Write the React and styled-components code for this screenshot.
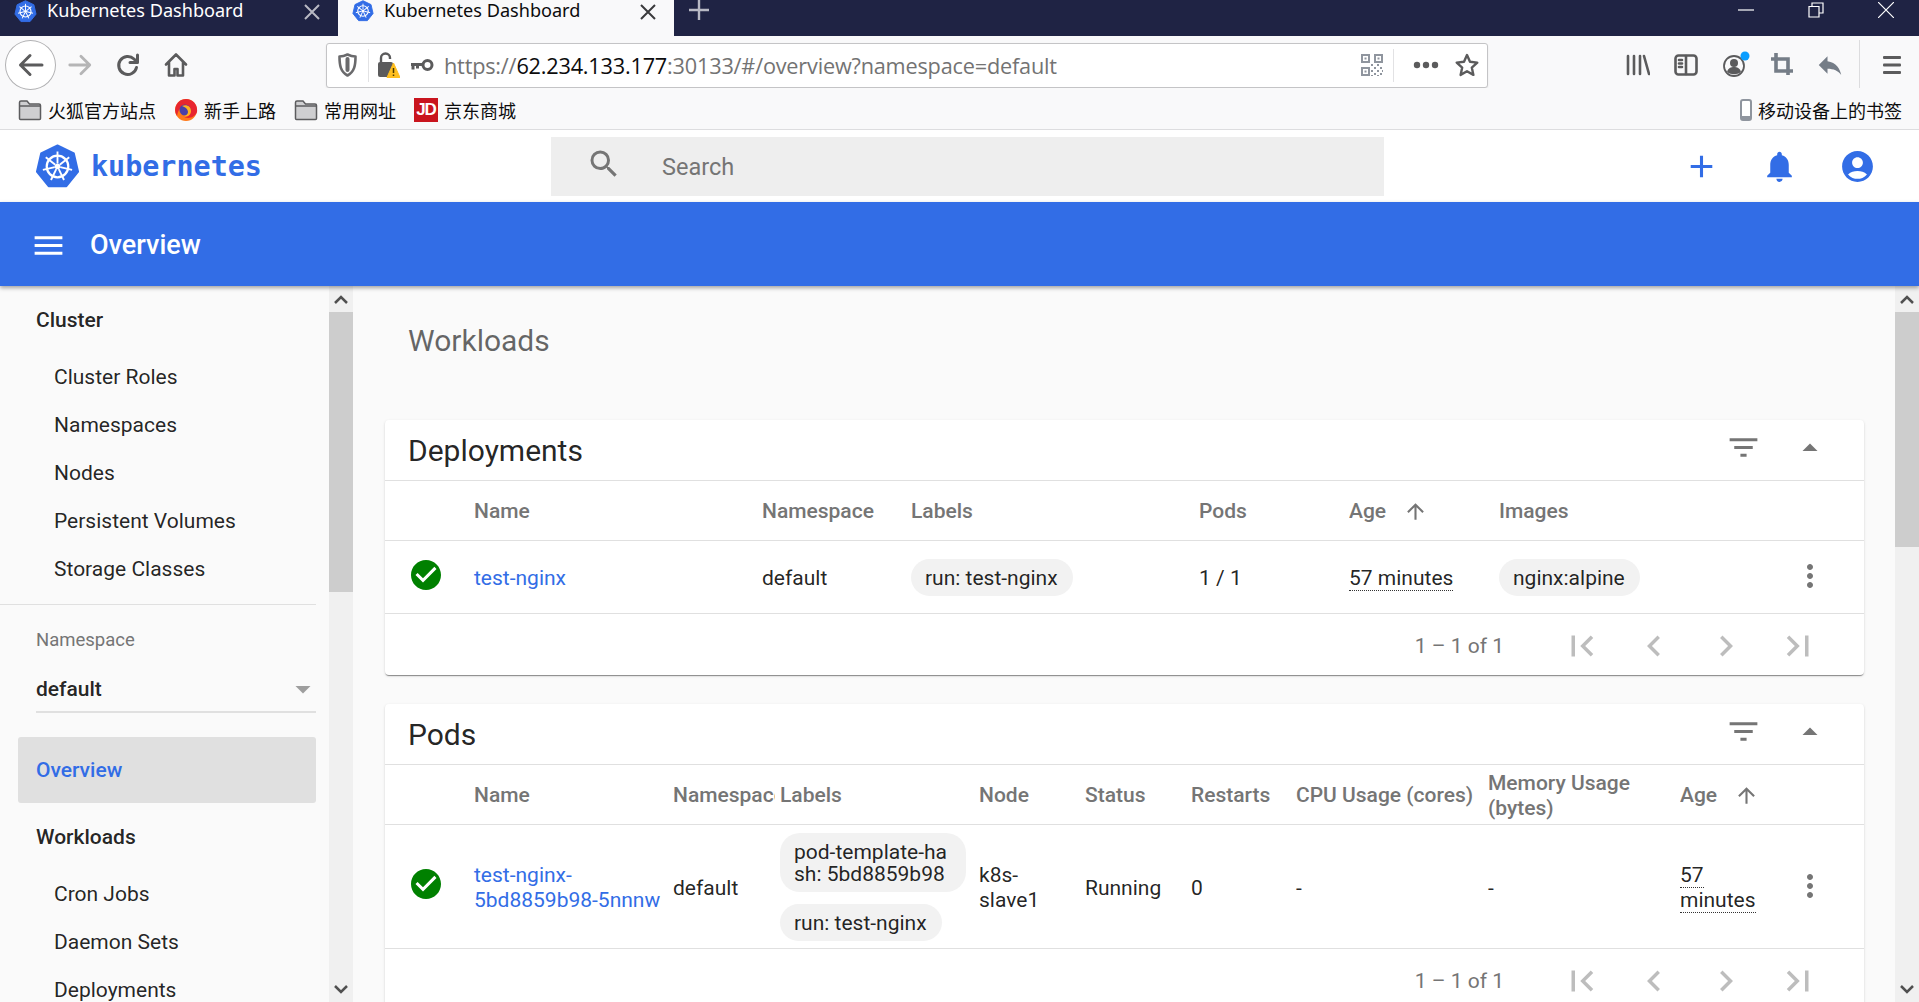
import styled, { createGlobalStyle } from 'styled-components';
import {
  MdAdd, MdAccountCircle, MdArrowDropDown, MdArrowDropUp, MdArrowUpward, MdCheckCircle,
  MdChevronLeft, MdChevronRight, MdFilterList, MdFirstPage, MdLastPage, MdMenu, MdMoreVert,
  MdNotifications, MdReply, MdSearch,
} from 'react-icons/md';

const GlobalStyle = createGlobalStyle`
  html, body { margin: 0; padding: 0; height: 100%; overflow: hidden; }
  body { font-family: Roboto, "Noto Sans CJK SC", sans-serif; background: #fafafa; }
  * { box-sizing: border-box; }
`;

const Page = styled.div`
  height: 100vh;
  display: flex;
  flex-direction: column;
  overflow: hidden;
`;

/* browser chrome */
const TabStrip = styled.div`
  height: 36px;
  flex: none;
  display: flex;
  background: #1f2344;
  color: #fff;
  overflow: hidden;
`;

const Tab = styled.div`
  width: ${(p) => (p.$active ? 336 : 338)}px;
  display: flex;
  align-items: flex-start;
  padding: 0 18px 0 14px;
  background: ${(p) => (p.$active ? '#f9f9fa' : 'transparent')};
  color: ${(p) => (p.$active ? '#0c0c0d' : '#fff')};
`;

const TabTitle = styled.span`
  margin-left: 10px;
  font: 18.1px/21px "Noto Sans", "Noto Sans CJK SC", sans-serif;
`;

const TabClose = styled.svg`
  width: 16px;
  height: 16px;
  margin: 4px 0 0 auto;
  stroke: ${(p) => p.$color};
  stroke-width: 2;
`;

const NewTab = styled.svg`
  width: 20px;
  height: 20px;
  margin-left: 15px;
  stroke: #b8b9c4;
  stroke-width: 2.4;
`;

const WindowControls = styled.div`
  margin-left: auto;
  display: flex;
  align-items: flex-start;
  gap: 54px;
  padding: 2px 25px 0 0;
`;

const WindowIcon = styled.svg`
  width: 16px;
  height: 16px;
  fill: none;
  stroke: #fff;
  stroke-width: 1.2;
`;

const NavBar = styled.div`
  height: 52px;
  flex: none;
  display: flex;
  align-items: center;
  padding: 6px 3px 0 5px;
  background: #f9f9fa;
`;

const BackButton = styled.div`
  width: 51px;
  height: 50px;
  flex: none;
  border: 1px solid #b1b1b3;
  border-radius: 50%;
  background: #fff;
  color: #5b5b5c;
  display: flex;
  align-items: center;
  justify-content: center;
  z-index: 1;
`;

const NavSlot = styled.div`
  width: ${(p) => p.$w || 48}px;
  height: 44px;
  flex: none;
  display: flex;
  align-items: center;
  justify-content: center;
  color: ${(p) => p.$color || '#5b5b5c'};
`;

const UrlBar = styled.div`
  width: 1162px;
  height: 45px;
  margin-left: 126px;
  display: flex;
  align-items: center;
  flex: none;
  background: #fff;
  border: 1px solid #c4c4c6;
  border-radius: 3px;
  box-shadow: 0 1px 2px rgba(0, 0, 0, 0.08);
`;

const UrlDivider = styled.div`
  width: 1px;
  height: 33px;
  flex: none;
  background: #e2e2e4;
  margin-right: ${(p) => p.$mr || 0}px;
`;

const UrlText = styled.div`
  flex: 1;
  margin-left: 9px;
  padding-top: 1px;
  font: 21.7px/26px "Open Sans", "Noto Sans", sans-serif;
  letter-spacing: -0.2px;
  color: #737373;
  white-space: nowrap;
  b { font-weight: 400; color: #0c0c0d; }
`;

const ToolGroup = styled.div`
  margin-left: auto;
  display: flex;
  align-items: center;
`;

const ToolDivider = styled.div`
  width: 1px;
  height: 50px;
  margin: 0 8px 0 5px;
  background: #dcdcde;
`;

const BookmarkBar = styled.div`
  height: 42px;
  flex: none;
  display: flex;
  align-items: center;
  padding: 2px 17px 0 18px;
  background: #f9f9fa;
  border-bottom: 1px solid #dddddf;
`;

const Bookmark = styled.div`
  display: flex;
  align-items: center;
  gap: 6px;
  margin-right: 18px;
  font: 18px/24px "Noto Sans CJK SC", sans-serif;
  color: #0c0c0d;
  &:last-child { margin: 0 0 0 auto; }
`;

const JdBadge = styled.span`
  width: 24px;
  height: 24px;
  background: #c9151e;
  color: #fff;
  font: 700 17px/24px "Liberation Sans", sans-serif;
  letter-spacing: -1px;
  text-align: center;
`;

/* dashboard header */
const TopBar = styled.header`
  height: 72px;
  flex: none;
  display: flex;
  align-items: center;
  background: #fff;
  color: #326de6;
`;

const Brand = styled.div`
  width: 551px;
  display: flex;
  align-items: center;
  padding-left: 35px;
  gap: 11px;
`;

const BrandName = styled.span`
  margin-top: 2px;
  font: 700 28.4px/34px "DejaVu Sans Mono", monospace;
`;

const SearchBox = styled.div`
  width: 833px;
  height: 59px;
  display: flex;
  align-items: center;
  padding: 2px 0 0 35px;
  gap: 40px;
  background: #eeeeee;
  color: #757575;
  font-size: 23.5px;
  svg { margin-top: -7px; }
`;

const TopActions = styled.div`
  margin-left: auto;
  display: flex;
  gap: 41px;
  padding-right: 43px;
`;

const TitleBar = styled.div`
  height: 84px;
  flex: none;
  display: flex;
  align-items: center;
  padding: 2px 0 0 30px;
  gap: 23px;
  background: #326de6;
  color: #fff;
  font-size: 27px;
  font-weight: 500;
  box-shadow: 0 2px 4px rgba(0, 0, 0, 0.35);
  z-index: 2;
`;

const Body = styled.div`
  flex: 1;
  min-height: 0;
  display: flex;
`;

/* scrollbars */
const ScrollTrack = styled.div`
  width: 24px;
  flex: none;
  display: flex;
  flex-direction: column;
  background: #f0f0f0;
  color: #505050;
`;

const ScrollArrow = styled.div`
  height: 26px;
  flex: none;
  display: flex;
  align-items: center;
  justify-content: center;
  &:last-child { margin-top: auto; }
`;

const ScrollThumb = styled.div`
  height: ${(p) => p.$h}px;
  background: #cdcdcd;
`;

/* side navigation */
const Sidebar = styled.aside`
  width: 329px;
  flex: none;
  padding: 10px 13px 0 0;
  overflow: hidden;
  font-size: 21px;
  color: rgba(0, 0, 0, 0.87);
`;

const NavTitle = styled.div`
  height: 48px;
  display: flex;
  align-items: center;
  padding-left: 36px;
  margin-bottom: 9px;
  font-weight: 500;
`;

const NavItem = styled.div`
  height: 48px;
  display: flex;
  align-items: center;
  padding-left: 54px;
  white-space: nowrap;
`;

const NavDivider = styled.div`
  height: 1px;
  margin-top: 11px;
  background: #e0e0e0;
`;

const NamespaceBlock = styled.div`
  margin-left: 36px;
  padding-top: 24px;
`;

const NamespaceLabel = styled.div`
  height: 22px;
  font-size: 18.5px;
  line-height: 22px;
  color: #757575;
`;

const NamespaceSelect = styled.div`
  height: 45px;
  margin-top: 17px;
  display: flex;
  align-items: center;
  justify-content: space-between;
  padding-bottom: 1px;
  border-bottom: 2px solid #e0e0e0;
  font-weight: 500;
  color: #9e9e9e;
  span { color: rgba(0, 0, 0, 0.87); }
  svg { margin-right: -5px; }
`;

const ActiveItem = styled.div`
  height: 66px;
  margin: 24px 0 10px 18px;
  display: flex;
  align-items: center;
  padding-left: 18px;
  border-radius: 3px;
  background: #e0e0e0;
  color: #326de6;
  font-weight: 500;
`;

/* main content */
const Main = styled.main`
  flex: 1;
  min-width: 0;
  padding: 35px 31px 0 32px;
  overflow: hidden;
`;

const SectionHeading = styled.h1`
  height: 40px;
  margin: 0 0 59px 23px;
  font-size: 30px;
  line-height: 40px;
  font-weight: 400;
  color: rgba(0, 0, 0, 0.6);
`;

const Card = styled.section`
  margin-bottom: 29px;
  background: #fff;
  border-radius: 4px;
  box-shadow: 0 2px 1px -1px rgba(0, 0, 0, 0.3), 0 1px 1px 0 rgba(0, 0, 0, 0.14), 0 1px 3px 0 rgba(0, 0, 0, 0.12);
`;

const CardHeader = styled.div`
  height: 61px;
  display: flex;
  align-items: center;
  padding: 0 36px 0 23px;
  border-bottom: 1px solid #e0e0e0;
  color: #757575;
`;

const CardTitle = styled.h2`
  margin: 0 auto 0 0;
  font-size: 30px;
  font-weight: 400;
  color: rgba(0, 0, 0, 0.87);
`;

const HeaderActions = styled.div`
  display: flex;
  align-items: center;
  gap: 30px;
  margin-top: -5px;
`;

const TableRow = styled.div`
  display: grid;
  grid-template-columns: ${(p) => p.$columns};
  align-items: center;
  min-height: ${(p) => p.$height}px;
  padding-right: 36px;
  border-bottom: 1px solid #e0e0e0;
`;

const HeadCell = styled.div`
  display: flex;
  align-items: center;
  gap: 17px;
  min-width: 0;
  margin-right: ${(p) => p.$mr || 0}px;
  padding-top: 2px;
  overflow: hidden;
  white-space: ${(p) => (p.$wrap ? 'normal' : 'nowrap')};
  font-size: 21px;
  line-height: 25px;
  font-weight: 500;
  color: #757575;
`;

const Cell = styled.div`
  min-width: 0;
  padding: 3px ${(p) => p.$pr || 0}px 0 0;
  font-size: 21px;
  line-height: 25px;
  color: rgba(0, 0, 0, 0.87);
`;

const StatusCell = styled.div`
  padding-left: 23px;
  display: flex;
  margin-bottom: 5px;
  color: #008000;
`;

const NameLink = styled.a`
  color: #326de6;
  text-decoration: none;
`;

const AgeText = styled.span`
  border-bottom: 1px dotted rgba(0, 0, 0, 0.8);
`;

const ChipStack = styled.div`
  display: flex;
  flex-direction: column;
  align-items: flex-start;
  gap: 12px;
`;

const Chip = styled.span`
  max-width: 186px;
  padding: 8px 15px 7px 14px;
  background: #f2f2f2;
  border-radius: 20px;
  font-size: 21px;
  line-height: 22px;
  word-break: break-all;
  color: rgba(0, 0, 0, 0.87);
`;

const RowMenu = styled.div`
  display: flex;
  margin-bottom: 2px;
  color: #757575;
`;

const Paginator = styled.div`
  height: 61px;
  display: flex;
  align-items: center;
  justify-content: flex-end;
  padding: 2px 30px 0 0;
  font-size: 21px;
  color: #757575;
`;

const PageRange = styled.span`
  margin-right: 42px;
`;

const PageButton = styled.div`
  width: 72px;
  display: flex;
  justify-content: center;
  color: #bdbdbd;
`;

const ProfileSvg = styled.svg`
  margin-left: 4px;
`;

const KubeLogo = ({ size }) => {
  const spokes = [0, 51.43, 102.86, 154.29, 205.71, 257.14, 308.57];
  return (
    <svg width={size} height={size} viewBox="0 0 48 48">
      <path
        d="M24 1.5 41.5 10 46 29.5 33.5 45H14.500L2 29.500 6.500 10Z"
        fill="#326de6"
        stroke="#326de6"
        strokeWidth="2"
        strokeLinejoin="round"
      />
      <g stroke="#fff" fill="none">
        <circle cx="24" cy="24" r="11.5" strokeWidth="2.4" />
        {spokes.map((a) => (
          <line key={a} x1="24" y1="21" x2="24" y2="8" strokeWidth="2" transform={`rotate(${a} 24 24)`} />
        ))}
      </g>
      <circle cx="24" cy="24" r="3" fill="#fff" />
    </svg>
  );
};

const CloseGlyph = ({ color }) => (
  <TabClose viewBox="0 0 16 16" $color={color}>
    <path d="M1 1l14 14M15 1 1 15" />
  </TabClose>
);

const Folder = () => (
  <svg width="24" height="22" viewBox="0 0 24 22">
    <path d="M1.500 19.500V3.500A1.500 1.500 0 0 1 3 2h6l2.500 3H21a1.500 1.500 0 0 1 1.500 1.500v13a1 1 0 0 1-1 1h-19a1 1 0 0 1-1-1Z" fill="#cfcfd1" stroke="#5c5c5e" strokeWidth="1.500" />
    <path d="M2 7h20" stroke="#5c5c5e" strokeWidth="1.500" />
  </svg>
);

const FirefoxLogo = () => (
  <svg width="24" height="26" viewBox="0 0 24 26">
    <circle cx="12" cy="13" r="11" fill="#ff7a1a" />
    <path d="M12 2a11 11 0 0 0-9 17c1-6 3-8 6-9 3-1 6 0 7 3 1 4-3 7-7 6 3 3 11 3 14-4 1-7-4-13-11-13Z" fill="#e8252f" />
    <circle cx="11" cy="13" r="5.500" fill="#4a3fa8" />
    <path d="M8 9c4-2 9 0 9 5 0 4-4 7-8 5 3 0 5-2 5-4 0-3-3-5-6-6Z" fill="#ffb01f" />
  </svg>
);

const stroke = { fill: 'none', stroke: 'currentColor', strokeLinecap: 'round', strokeLinejoin: 'round' };

const ArrowLeft = () => (
  <svg width="28" height="28" viewBox="0 0 28 28" {...stroke} strokeWidth="3">
    <path d="M25 14H3.500M13 4.500 3.500 14l9.500 9.500" />
  </svg>
);

const ArrowRight = () => (
  <svg width="26" height="26" viewBox="0 0 28 28" {...stroke} strokeWidth="3">
    <path d="M3 14h21.500M15 4.500l9.500 9.500-9.500 9.500" />
  </svg>
);

const Reload = () => (
  <svg width="24" height="26" viewBox="0 0 24 26" {...stroke} strokeWidth="3">
    <path d="M20.500 15.500a9 9 0 1 1-2.500-8.500l3 3M21.500 3v7.500H14" />
  </svg>
);

const Home = () => (
  <svg width="24" height="26" viewBox="0 0 24 26" {...stroke} strokeWidth="2.600">
    <path d="M2 12.500 12 2.500l10 10M5 10v13.500h5.500V17h3v6.500H19V10" />
  </svg>
);

const Shield = () => (
  <svg width="19" height="24" viewBox="0 0 19 24" {...stroke} strokeWidth="2.600">
    <path d="M9.500 1.500c3 1.500 5.500 2 8 2 0 9-1 15-8 19-7-4-8-10-8-19 2.500 0 5-.5 8-2Z" />
    <path d="M9.500 6v11" strokeWidth="4" />
  </svg>
);

const LockWarning = () => (
  <svg width="22" height="28" viewBox="0 0 22 28">
    <rect x="0" y="11" width="15" height="15" rx="2" fill="#5b5b5c" />
    <path d="M3 11V7a4.500 4.500 0 0 1 9 0v1" fill="none" stroke="#5b5b5c" strokeWidth="2.400" />
    <path d="M15.500 12 22 26.500H9Z" fill="#ffbf1f" stroke="#ffbf1f" strokeLinejoin="round" />
    <path d="M15.500 17v5M15.500 23.500v1.500" stroke="#4a3a00" strokeWidth="1.500" />
  </svg>
);

const KeyIcon = () => (
  <svg width="24" height="14" viewBox="0 0 24 14" fill="none" stroke="#5b5b5c">
    <circle cx="17.500" cy="7" r="4.500" strokeWidth="3" />
    <path d="M13 6.500H1M3 6.500v5M7.500 6.500v4" strokeWidth="3" />
  </svg>
);

const QrIcon = () => {
  const dots = [[9, 9], [12, 12], [15, 9], [18, 12], [9, 15], [15, 15], [12, 18], [18, 18], [9, 20], [15, 20], [20, 15]];
  return (
    <svg width="22" height="22" viewBox="0 0 22 22" fill="#8f959e">
      <path fillRule="evenodd" d="M0 0h9v9H0ZM2 2v5h5V2ZM13 0h9v9h-9ZM15 2v5h5V2ZM0 13h9v9H0ZM2 15v5h5v-5Z" />
      <rect x="3.500" y="3.500" width="2" height="2" />
      <rect x="16.500" y="3.500" width="2" height="2" />
      <rect x="3.500" y="16.500" width="2" height="2" />
      {dots.map(([x, y]) => (
        <rect key={`${x}-${y}`} x={x + 1} y={y + 1} width="2" height="2" />
      ))}
    </svg>
  );
};

const Dots = () => (
  <svg width="26" height="8" viewBox="0 0 26 8" fill="#5b5b5c">
    <circle cx="4" cy="4" r="3.200" />
    <circle cx="13" cy="4" r="3.200" />
    <circle cx="22" cy="4" r="3.200" />
  </svg>
);

const StarIcon = () => (
  <svg width="24" height="24" viewBox="0 0 24 24" {...stroke} strokeWidth="2.400">
    <path d="m12 2 3 6.800 7.300.8-5.500 5 1.600 7.300L12 18.200l-6.400 3.700L7.200 14.600l-5.500-5 7.300-.8Z" />
  </svg>
);

const LibraryIcon = () => (
  <svg width="24" height="22" viewBox="0 0 24 22" {...stroke} strokeWidth="2.600">
    <path d="M2 2v18M8 2v18M14 2v18M18 2l5 18" />
  </svg>
);

const SidebarIcon = () => (
  <svg width="24" height="22" viewBox="0 0 24 22" {...stroke} strokeWidth="2.600">
    <rect x="1.500" y="1.500" width="21" height="19" rx="3" />
    <path d="M12 2v18M5 6h3M5 9.500h3M5 13h3" />
  </svg>
);

const ProfileIcon = () => (
  <ProfileSvg width="28" height="28" viewBox="0 0 28 28">
    <circle cx="12" cy="15" r="10" fill="none" stroke="#5b5b5c" strokeWidth="1.800" />
    <circle cx="12" cy="12" r="4" fill="#5b5b5c" />
    <path d="M5 21c1-4 4-5 7-5s6 1 7 5c-4 3-10 3-14 0Z" fill="#5b5b5c" />
    <circle cx="23" cy="5" r="4.500" fill="#0a9dff" />
  </ProfileSvg>
);

const CropIcon = () => (
  <svg width="22" height="24" viewBox="0 0 22 24" fill="none" stroke="#757d87" strokeWidth="3.600">
    <path d="M0 6h17v16M5 0v18h17" />
  </svg>
);

const BurgerIcon = () => (
  <svg width="18" height="20" viewBox="0 0 18 20" fill="#5b5b5c">
    <rect y="1" width="18" height="3" rx="1" />
    <rect y="8.500" width="18" height="3" rx="1" />
    <rect y="16" width="18" height="3" rx="1" />
  </svg>
);

const PhoneIcon = () => (
  <svg width="12" height="22" viewBox="0 0 12 22">
    <rect x="1" y="1" width="10" height="20" rx="2" fill="#fff" stroke="#8f959e" strokeWidth="2" />
    <rect x="1" y="17" width="10" height="4" rx="1" fill="#8f959e" />
  </svg>
);

const ScrollUp = () => (
  <svg width="14" height="9" viewBox="0 0 14 9" fill="none" stroke="currentColor" strokeWidth="2.500">
    <path d="M1 8l6-6 6 6" />
  </svg>
);

const ScrollDown = () => (
  <svg width="14" height="9" viewBox="0 0 14 9" fill="none" stroke="currentColor" strokeWidth="2.500">
    <path d="M1 1l6 6 6-6" />
  </svg>
);

const DEPLOYMENT_COLUMNS = '89px 288px 149px 288px 150px 150px 293px 36px';
const POD_COLUMNS = '89px 199px 107px 199px 106px 106px 105px 192px 192px 112px 36px';

const CardActions = () => (
  <HeaderActions>
    <MdFilterList size={37} />
    <MdArrowDropUp size={36} />
  </HeaderActions>
);

const CardPaginator = () => (
  <Paginator>
    <PageRange>1 – 1 of 1</PageRange>
    <PageButton><MdFirstPage size={42} /></PageButton>
    <PageButton><MdChevronLeft size={42} /></PageButton>
    <PageButton><MdChevronRight size={42} /></PageButton>
    <PageButton><MdLastPage size={42} /></PageButton>
  </Paginator>
);

const ClusterItems = ['Cluster Roles', 'Namespaces', 'Nodes', 'Persistent Volumes', 'Storage Classes'];
const WorkloadItems = ['Cron Jobs', 'Daemon Sets', 'Deployments'];

const App = () => (
  <Page>
    <GlobalStyle />
    <TabStrip>
      <Tab>
        <KubeLogo size={23} />
        <TabTitle>Kubernetes Dashboard</TabTitle>
        <CloseGlyph color="#b8b9c4" />
      </Tab>
      <Tab $active>
        <KubeLogo size={22} />
        <TabTitle>Kubernetes Dashboard</TabTitle>
        <CloseGlyph color="#3a3a3c" />
      </Tab>
      <NewTab viewBox="0 0 20 20">
        <path d="M10 0v20M0 10h20" />
      </NewTab>
      <WindowControls>
        <WindowIcon viewBox="0 0 16 16"><path d="M0 8h16" /></WindowIcon>
        <WindowIcon viewBox="0 0 16 16"><path d="M1 4.500h10v10.500H1ZM4 4.500V1h11v10h-4" /></WindowIcon>
        <WindowIcon viewBox="0 0 16 16"><path d="M0 0l16 16M16 0 0 16" /></WindowIcon>
      </WindowControls>
    </TabStrip>

    <NavBar>
      <BackButton><ArrowLeft /></BackButton>
      <NavSlot $color="#b5b5b6"><ArrowRight /></NavSlot>
      <NavSlot><Reload /></NavSlot>
      <NavSlot><Home /></NavSlot>
      <UrlBar>
        <NavSlot $w={41} $color="#6a6a6c"><Shield /></NavSlot>
        <UrlDivider />
        <NavSlot $w={40}><LockWarning /></NavSlot>
        <NavSlot $w={26}><KeyIcon /></NavSlot>
        <UrlText>https://<b>62.234.133.177</b>:30133/#/overview?namespace=default</UrlText>
        <NavSlot $w={42}><QrIcon /></NavSlot>
        <UrlDivider $mr={11} />
        <NavSlot $w={42}><Dots /></NavSlot>
        <NavSlot $w={40}><StarIcon /></NavSlot>
      </UrlBar>
      <ToolGroup>
        <NavSlot><LibraryIcon /></NavSlot>
        <NavSlot><SidebarIcon /></NavSlot>
        <NavSlot><ProfileIcon /></NavSlot>
        <NavSlot><CropIcon /></NavSlot>
        <NavSlot $color="#757d87"><MdReply size={30} /></NavSlot>
        <ToolDivider />
        <NavSlot><BurgerIcon /></NavSlot>
      </ToolGroup>
    </NavBar>

    <BookmarkBar>
      <Bookmark><Folder />火狐官方站点</Bookmark>
      <Bookmark><FirefoxLogo />新手上路</Bookmark>
      <Bookmark><Folder />常用网址</Bookmark>
      <Bookmark><JdBadge>JD</JdBadge>京东商城</Bookmark>
      <Bookmark><PhoneIcon />移动设备上的书签</Bookmark>
    </BookmarkBar>

    <TopBar>
      <Brand>
        <KubeLogo size={45} />
        <BrandName>kubernetes</BrandName>
      </Brand>
      <SearchBox>
        <MdSearch size={36} />
        Search
      </SearchBox>
      <TopActions>
        <MdAdd size={37} />
        <MdNotifications size={37} />
        <MdAccountCircle size={37} />
      </TopActions>
    </TopBar>

    <TitleBar>
      <MdMenu size={37} />
      Overview
    </TitleBar>

    <Body>
      <Sidebar>
        <NavTitle>Cluster</NavTitle>
        {ClusterItems.map((item) => <NavItem key={item}>{item}</NavItem>)}
        <NavDivider />
        <NamespaceBlock>
          <NamespaceLabel>Namespace</NamespaceLabel>
          <NamespaceSelect>
            <span>default</span>
            <MdArrowDropDown size={36} />
          </NamespaceSelect>
        </NamespaceBlock>
        <ActiveItem>Overview</ActiveItem>
        <NavTitle>Workloads</NavTitle>
        {WorkloadItems.map((item) => <NavItem key={item}>{item}</NavItem>)}
      </Sidebar>
      <ScrollTrack>
        <ScrollArrow><ScrollUp /></ScrollArrow>
        <ScrollThumb $h={280} />
        <ScrollArrow><ScrollDown /></ScrollArrow>
      </ScrollTrack>

      <Main>
        <SectionHeading>Workloads</SectionHeading>

        <Card>
          <CardHeader>
            <CardTitle>Deployments</CardTitle>
            <CardActions />
          </CardHeader>
          <TableRow $columns={DEPLOYMENT_COLUMNS} $height={60}>
            <span />
            <HeadCell>Name</HeadCell>
            <HeadCell>Namespace</HeadCell>
            <HeadCell>Labels</HeadCell>
            <HeadCell>Pods</HeadCell>
            <HeadCell>Age<MdArrowUpward size={25} /></HeadCell>
            <HeadCell>Images</HeadCell>
          </TableRow>
          <TableRow $columns={DEPLOYMENT_COLUMNS} $height={73}>
            <StatusCell><MdCheckCircle size={36} /></StatusCell>
            <Cell><NameLink>test-nginx</NameLink></Cell>
            <Cell>default</Cell>
            <ChipStack><Chip>run: test-nginx</Chip></ChipStack>
            <Cell>1 / 1</Cell>
            <Cell><AgeText>57 minutes</AgeText></Cell>
            <ChipStack><Chip>nginx:alpine</Chip></ChipStack>
            <RowMenu><MdMoreVert size={36} /></RowMenu>
          </TableRow>
          <CardPaginator />
        </Card>

        <Card>
          <CardHeader>
            <CardTitle>Pods</CardTitle>
            <CardActions />
          </CardHeader>
          <TableRow $columns={POD_COLUMNS} $height={60}>
            <span />
            <HeadCell>Name</HeadCell>
            <HeadCell $mr={5}>Namespace</HeadCell>
            <HeadCell>Labels</HeadCell>
            <HeadCell>Node</HeadCell>
            <HeadCell>Status</HeadCell>
            <HeadCell>Restarts</HeadCell>
            <HeadCell>CPU Usage (cores)</HeadCell>
            <HeadCell $wrap>Memory Usage (bytes)</HeadCell>
            <HeadCell>Age<MdArrowUpward size={25} /></HeadCell>
          </TableRow>
          <TableRow $columns={POD_COLUMNS} $height={124}>
            <StatusCell><MdCheckCircle size={36} /></StatusCell>
            <Cell><NameLink>test-nginx-5bd8859b98-5nnnw</NameLink></Cell>
            <Cell>default</Cell>
            <ChipStack>
              <Chip>pod-template-hash: 5bd8859b98</Chip>
              <Chip>run: test-nginx</Chip>
            </ChipStack>
            <Cell $pr={16}>k8s-slave1</Cell>
            <Cell>Running</Cell>
            <Cell>0</Cell>
            <Cell>-</Cell>
            <Cell>-</Cell>
            <Cell $pr={30}><AgeText>57 minutes</AgeText></Cell>
            <RowMenu><MdMoreVert size={36} /></RowMenu>
          </TableRow>
          <CardPaginator />
        </Card>
      </Main>
      <ScrollTrack>
        <ScrollArrow><ScrollUp /></ScrollArrow>
        <ScrollThumb $h={235} />
        <ScrollArrow><ScrollDown /></ScrollArrow>
      </ScrollTrack>
    </Body>
  </Page>
);

export default App;
